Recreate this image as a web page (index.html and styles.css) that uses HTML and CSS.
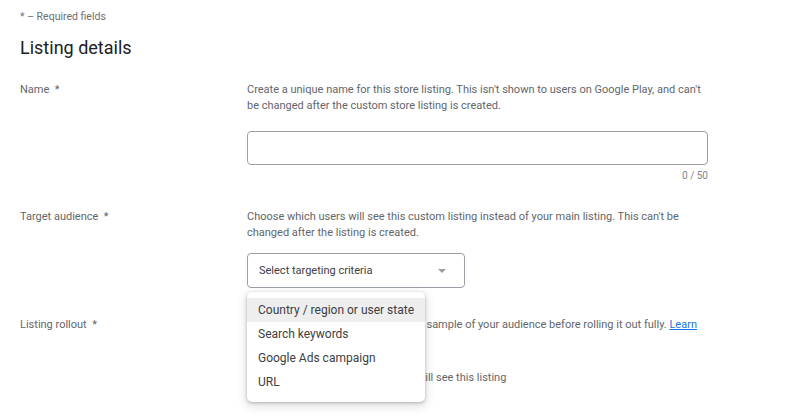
FILE: index.html
```html
<!DOCTYPE html>
<html>
<head>
<meta charset="utf-8">
<link rel="stylesheet" href="styles.css">
</head>
<body>
<div class="page">
  <div class="required">* – Required fields</div>
  <h1 class="title">Listing details</h1>

  <div class="row row-name">
    <div class="label">Name &nbsp;*</div>
    <div class="field">
      <p class="desc">Create a unique name for this store listing. This isn't shown to users on Google Play, and can't be changed after the custom store listing is created.</p>
      <div class="input"></div>
      <div class="counter">0 / 50</div>
    </div>
  </div>

  <div class="row row-audience">
    <div class="label">Target audience &nbsp;*</div>
    <div class="field">
      <p class="desc">Choose which users will see this custom listing instead of your main listing. This can't be changed after the listing is created.</p>
      <div class="select-wrap">
        <div class="select">
          <span>Select targeting criteria</span>
          <svg class="arrow" width="8" height="4" viewBox="0 0 8 4"><path d="M0 0 L8 0 L4 4 Z" fill="#9aa0a6"/></svg>
        </div>
        <ul class="menu">
          <li class="active">Country / region or user state</li>
          <li>Search keywords</li>
          <li>Google Ads campaign</li>
          <li>URL</li>
        </ul>
      </div>
    </div>
  </div>

  <div class="row row-rollout">
    <div class="label">Listing rollout &nbsp;*</div>
    <div class="field">
      <p class="desc">Roll out your listing first to a random sample of your audience before rolling it out fully. <a href="#">Learn more</a></p>
      <div class="radio-line">All users will see this listing</div>
    </div>
  </div>
</div>
</body>
</html>
```

FILE: styles.css
```css
* { box-sizing: border-box; }
html, body { margin: 0; padding: 0; background: #ffffff; }
body {
  font-family: Roboto, "Liberation Sans", Arial, sans-serif;
  color: #5f6368;
  font-size: 11px;
  line-height: 16px;
}
.page {
  padding: 9px 0 0 20px;
  width: 800px;
  min-height: 419px;
}
.required {
  font-size: 10.5px;
  line-height: 16px;
  color: #6b6f73;
}
.title {
  margin: 11px 0 0 0;
  font-size: 18px;
  line-height: 24px;
  font-weight: 400;
  color: #202124;
}
.row {
  display: grid;
  grid-template-columns: 227px 461px;
}
.row-name { margin-top: 22px; }
.row-audience { margin-top: 25px; }
.row-rollout { margin-top: 29px; }
.label {
  color: #62666a;
}
.desc {
  margin: 0;
  color: #62666a;
}
.desc a { color: #1a73e8; }
.input {
  margin-top: 17px;
  height: 34px;
  border: 1px solid #9aa0a6;
  border-radius: 4px;
}
.counter {
  margin-top: 3px;
  text-align: right;
  font-size: 10px;
  color: #80868b;
}
.select-wrap {
  position: relative;
  margin-top: 12px;
  width: 218px;
}
.select {
  height: 35px;
  border: 1px solid #9aa0a6;
  border-radius: 4px;
  display: flex;
  align-items: center;
  justify-content: space-between;
  padding: 0 18px 0 11px;
  color: #3c4043;
  font-size: 11px;
}
.menu {
  position: absolute;
  left: 0;
  top: 39px;
  width: 178px;
  margin: 0;
  padding: 6px 0 8px 0;
  list-style: none;
  background: #ffffff;
  border-radius: 5px;
  box-shadow: 0 1px 3px rgba(60,64,67,0.32), 0 3px 8px 2px rgba(60,64,67,0.15);
  z-index: 10;
}
.menu li {
  height: 24px;
  line-height: 24px;
  padding-left: 11px;
  font-size: 12px;
  color: #3c4043;
  white-space: nowrap;
}
.menu li.active { background: #eeeeee; }
.radio-line {
  margin-top: 21px;
  padding-left: 125px;
  color: #62666a;
}
```
